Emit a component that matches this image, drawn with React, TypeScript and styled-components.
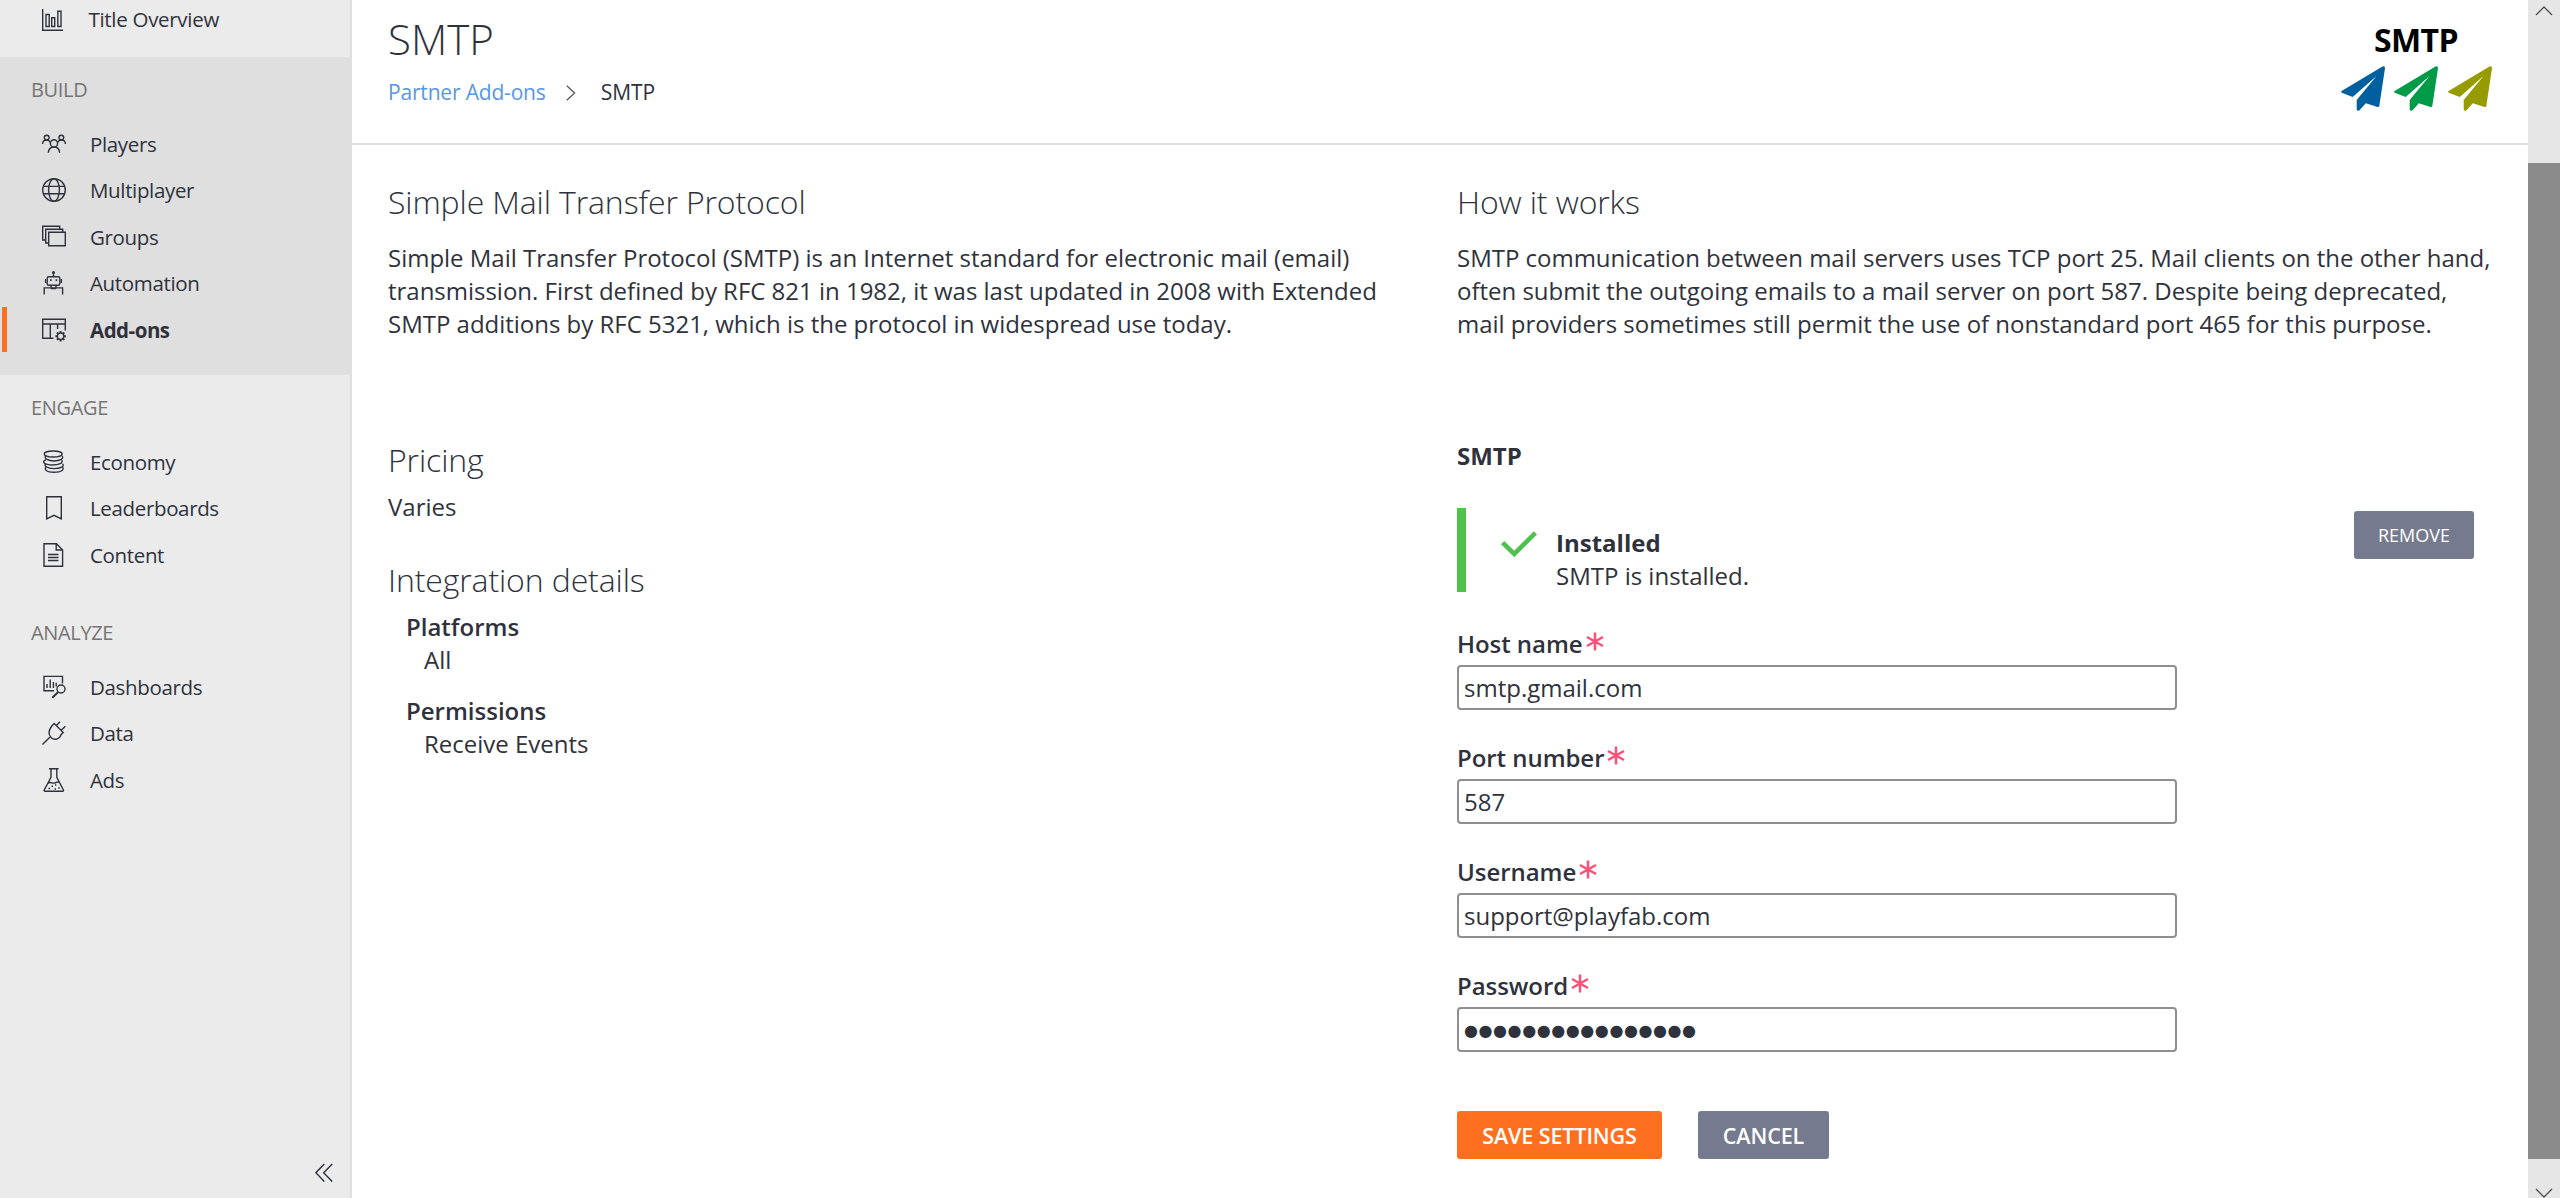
import React from 'react';
import styled, { createGlobalStyle } from 'styled-components';

const ink = '#2f323c';
const line = '#dfdfdf';

const GlobalStyle = createGlobalStyle`
  * { box-sizing: border-box; }
  html, body { margin: 0; padding: 0; overflow: hidden; background: #fff; }
  body { color: ${ink}; font: 400 24px/33px "Open Sans", "Noto Sans", sans-serif; }
  h1, h2, h3, p, ul { margin: 0; padding: 0; list-style: none; }
`;

const Page = styled.div`
  display: flex;
  width: 2560px;
  height: 1198px;
  overflow: hidden;
`;

/* Sidebar */

const Sidebar = styled.nav`
  flex: none;
  display: flex;
  flex-direction: column;
  width: 352px;
  background: #ebebeb;
  border-right: 2px solid ${line};
`;

const TopItem = styled.div`
  display: flex;
  align-items: center;
  height: 57px;
  padding: 0 0 18px 42px;
  font-size: 20.5px;
  letter-spacing: -0.3px;
  gap: 22.5px;
`;

const Section = styled.section<{ $active?: boolean }>`
  padding-bottom: 23px;
  background: ${p => (p.$active ? line : 'transparent')};
`;

const SectionTitle = styled.div`
  display: flex;
  align-items: center;
  height: 64px;
  padding-left: 31px;
  font-size: 20px;
  letter-spacing: -0.35px;
  color: #757575;
`;

const NavList = styled.ul`
  display: flex;
  flex-direction: column;
  gap: 1.5px;
`;

const NavItem = styled.li<{ $active?: boolean }>`
  display: flex;
  align-items: center;
  gap: 24px;
  height: 45px;
  margin-left: 2px;
  padding-left: 35px;
  border-left: 5px solid ${p => (p.$active ? '#ff6f20' : 'transparent')};
  font-size: 20.5px;
  font-weight: ${p => (p.$active ? 700 : 400)};
  letter-spacing: ${p => (p.$active ? -0.5 : -0.35)}px;
`;

const NavLabel = styled.span`
  padding-top: 1px;
`;

const Icon = styled.svg`
  flex: none;
  width: 24px;
  height: 24px;
  fill: none;
  stroke: ${ink};
  stroke-width: 1.4;
  overflow: visible;
`;

const Collapse = styled.div`
  display: flex;
  justify-content: flex-end;
  margin-top: auto;
  padding: 0 17px 15px 0;
`;

const CollapseIcon = styled.svg`
  width: 18px;
  height: 20px;
  fill: none;
  stroke: ${ink};
  stroke-width: 1.4;
`;

/* Main area */

const Main = styled.main`
  flex: 1;
  min-width: 0;
`;

const Header = styled.header`
  display: flex;
  justify-content: space-between;
  height: 145px;
  padding: 10px 36px 0;
  border-bottom: 2px solid ${line};
`;

const Title = styled.h1`
  font-size: 42px;
  line-height: 57px;
  font-weight: 300;
`;

const Crumbs = styled.div`
  display: flex;
  align-items: center;
  height: 29px;
  margin-top: 11px;
  font-size: 21px;
`;

const CrumbLink = styled.span`
  letter-spacing: -0.18px;
  color: #5797e6;
`;

const CrumbArrow = styled.svg`
  width: 10px;
  height: 16px;
  margin: 0 25px 0 20px;
  fill: none;
  stroke: #50535b;
  stroke-width: 1.2;
`;

const Logo = styled.div`
  display: flex;
  flex-direction: column;
  align-items: center;
  width: 152px;
  padding-top: 8px;
`;

const LogoText = styled.div`
  font-size: 32px;
  line-height: 44px;
  font-weight: 700;
  letter-spacing: -0.6px;
  color: #000;
`;

const Planes = styled.div`
  display: flex;
  gap: 9.5px;
  margin-top: 4px;
`;

const PlaneIcon = styled.svg`
  width: 44px;
  height: 45px;
`;

const Columns = styled.div`
  display: grid;
  grid-template-columns: 1033px 1037px;
  column-gap: 36px;
  padding: 0 0 0 36px;
`;

const Intro = styled.section`
  height: 293px;
  padding-top: 35px;
`;

const Heading = styled.h2`
  font-size: 32px;
  line-height: 44px;
  font-weight: 300;
  letter-spacing: -0.12px;
`;

const IntroText = styled.p`
  margin-top: 17px;
  letter-spacing: -0.015px;
`;

const Facts = styled.section``;

const Price = styled.p`
  margin: 8px 0 35px;
`;

const Detail = styled.div`
  padding: 8px 0 0 18px;
  & + & { padding-top: 18px; }
`;

const DetailName = styled.h3`
  font: inherit;
  font-weight: 600;
`;

const DetailValue = styled.p`
  padding-left: 18px;
`;

const Setup = styled.section`
  padding-top: 1px;
`;

const SetupTitle = styled.h3`
  font: inherit;
  font-weight: 700;
`;

const StatusRow = styled.div`
  display: flex;
  justify-content: space-between;
  margin-top: 36px;
  padding-right: 20px;
`;

const Status = styled.div`
  display: flex;
  gap: 19px;
  height: 84px;
  padding: 18px 0 0 35px;
  border-left: 9px solid #51c14e;
`;

const Check = styled.svg`
  width: 36px;
  height: 26px;
  margin-top: 5px;
  fill: none;
  stroke: #51c14e;
  stroke-width: 4.6;
`;

const StatusName = styled.div`
  font-weight: 700;
`;

const Button = styled.button<{ $primary?: boolean; $small?: boolean; $width: number }>`
  width: ${p => p.$width}px;
  height: 48px;
  margin-top: ${p => (p.$small ? 3 : 0)}px;
  padding: 0;
  border: 0;
  border-radius: 3px;
  background: ${p => (p.$primary ? '#ff6f20' : '#757a8e')};
  color: #fff;
  font-family: inherit;
  font-size: ${p => (p.$small ? 18 : 21.5)}px;
  font-weight: ${p => (p.$small ? 400 : 600)};
  letter-spacing: ${p => (p.$small ? 0 : -0.1)}px;
`;

const Form = styled.form`
  display: flex;
  flex-direction: column;
  gap: 30px;
  margin-top: 34px;
`;

const Field = styled.label`
  display: flex;
  flex-direction: column;
`;

const FieldName = styled.span`
  display: flex;
  gap: 3px;
  height: 39px;
  padding-top: 1px;
  font-weight: 600;
  letter-spacing: -0.05px;
`;

const Star = styled.svg`
  width: 18px;
  height: 19px;
  margin-top: 4.500px;
  stroke: #fb5078;
  stroke-width: 2.5;
`;

const Value = styled.span<{ $secret?: boolean }>`
  display: flex;
  align-items: center;
  width: 720px;
  height: 45px;
  padding-left: 5px;
  border: 2px solid #8f8f8f;
  border-radius: 4px;
  ${p => p.$secret && 'padding-top: 2px; font-family: "DejaVu Sans", sans-serif; font-size: 16px; letter-spacing: 0.58px;'}
`;

const Actions = styled.div`
  display: flex;
  gap: 36px;
  margin-top: 29px;
`;

/* Scrollbar */

const Scrollbar = styled.div`
  flex: none;
  display: flex;
  flex-direction: column;
  align-items: center;
  justify-content: space-between;
  width: 32px;
  background: #e6e6e6;
`;

const ScrollArrow = styled.svg`
  width: 18px;
  height: 10px;
  margin: 6px 0 0;
  fill: none;
  stroke: #505050;
  stroke-width: 1.3;
`;

const Thumb = styled.div`
  width: 32px;
  height: 996px;
  margin-top: 147px;
  margin-bottom: 23px;
  background: #8b8b8b;
`;

const icons = {
  overview: <path d="M.7 1v21.3H21M4 6.5h3.2v12H4zM9.7 9.7h3v8.8h-3zM15.8 3.2H19v15.3h-3.2z" />,
  players: (
    <>
      <circle cx="4.7" cy="5.6" r="2.4" />
      <circle cx="19.3" cy="5.6" r="2.4" />
      <circle cx="12" cy="11.4" r="3.6" />
      <path d="M.6 12c0-2.4 1.6-4 4-4 1.8 0 3 .8 3.9 2.4M23.4 12c0-2.4-1.6-4-4-4-1.8 0-3 .8-3.9 2.4M6.3 20.8c.3-3.3 2.4-5.8 5.7-5.8s5.400 2.500 5.700 5.800" />
    </>
  ),
  globe: (
    <>
      <circle cx="12" cy="12" r="11.3" />
      <ellipse cx="12" cy="12" rx="5.4" ry="11.3" />
      <path d="M1.400 8.400h21.200M1.400 15.800h21.200" />
    </>
  ),
  groups: <path d="M3.600 15H.7V1.300h17v2.500M6.700 18H3.700V4.200h17v2.600M6.700 7.200h16.600v13.500H6.700z" />,
  robot: (
    <>
      <rect x="5.200" y="5.800" width="12.600" height="8.400" rx="1.500" />
      <path d="M11.500 5.500V1.500M3.600 8v4M19.400 8v4M9 14.500v2M14 14.500v2M2.200 23.500v-6.600h18.400v6.600M8.500 16.800l1 .8h4l1-.8" />
      <circle cx="11.500" cy="1.500" r=".8" fill={ink} />
      <path d="M8 9.200h1.600M13.600 9.200h1.600" strokeWidth="1.800" />
    </>
  ),
  addons: (
    <>
      <path d="M11.500 20.200H.7V1.200h22.600v11.300M.7 6h22.600M8.300 6v14M15.600 6v5" />
      <circle cx="18.600" cy="18.200" r="3.200" />
      <path d="M18.600 13v1.800M18.600 21.600v1.900M13.400 18.200h1.800M22 18.200h1.900M14.900 14.500l1.300 1.300M21 20.600l1.300 1.300M14.900 21.900l1.300-1.300M21 15.800l1.300-1.300" strokeWidth="1.900" />
    </>
  ),
  economy: (
    <>
      <ellipse cx="11.200" cy="4" rx="9" ry="3" />
      <path d="M3.500 6.200C2 8.500 6 11 12 11s10.500-2.500 8-5M4 9.800c-5 1.700-2 5 6.500 5.200 6.500 0 11-2 9.200-4.900M3.600 13.700c-2 2.300 1.800 4.800 8 4.900 7 .1 11.500-2.400 8.900-4.800M3.900 17.300c-1.700 1.800 0 4.900 8 4.900 8.300 0 10.500-3 8.600-4.900" />
    </>
  ),
  bookmark: <path d="M4.700.8h14.600v22L12 19.300l-7.300 3.500z" />,
  document: <path d="M2 .8h12.500L20.600 7v16.200H2zM14.200.8V7h6.400M6 11.500h10.500M6 14.500h10.500M6 17.500h10.500" />,
  dashboards: (
    <>
      <path d="M12 15.700H2V1.400h18.500v7M5 13V9M8.200 13V4.500M11.400 13V7M14.200 11.500V7.700" />
      <circle cx="19" cy="14" r="4" />
      <path d="M16.200 17l-5.900 5.800" strokeWidth="1.900" />
    </>
  ),
  plug: <path d="M.5 23.500l7.300-7.300M12.200 2.500l9 9-2.200 2.200c-.6 3.600-6.400 6.300-9.700 3-3.200-3.200-3.300-7 .7-12zM14.300 4.600L18 .8M19.200 9.300l4.200-4" />,
  flask: (
    <>
      <path d="M7 .8h9.600M9 .8v8.600L2.200 22c-.3.700 0 1.200.8 1.200h17.600c.8 0 1.100-.5.8-1.200L14.800 9.400V.8M5.700 15.500c3-2.700 4.300.5 6.800-.5 2.300-1 3.300-1.600 5.300-.6" />
      <path d="M6.500 20.500h1.600M9.500 18.200h1.500M12.500 21h1.500M13 17h1.300M16.300 20h1.500" strokeWidth="1.600" />
    </>
  ),
};

type IconName = keyof typeof icons;
const Glyph = ({ name }: { name: IconName }) => <Icon viewBox="0 0 24 24">{icons[name]}</Icon>;

const sections: { title: string; active?: boolean; items: [IconName, string][] }[] = [
  {
    title: 'BUILD',
    active: true,
    items: [
      ['players', 'Players'],
      ['globe', 'Multiplayer'],
      ['groups', 'Groups'],
      ['robot', 'Automation'],
      ['addons', 'Add-ons'],
    ],
  },
  {
    title: 'ENGAGE',
    items: [
      ['economy', 'Economy'],
      ['bookmark', 'Leaderboards'],
      ['document', 'Content'],
    ],
  },
  {
    title: 'ANALYZE',
    items: [
      ['dashboards', 'Dashboards'],
      ['plug', 'Data'],
      ['flask', 'Ads'],
    ],
  },
];

const fields = [
  { name: 'Host name', value: 'smtp.gmail.com' },
  { name: 'Port number', value: '587' },
  { name: 'Username', value: 'support@playfab.com' },
  { name: 'Password', value: '●'.repeat(16), secret: true },
];

export default function App() {
  return (
    <>
      <GlobalStyle />
      <Page>
        <Sidebar>
          <TopItem>
            <Glyph name="overview" />
            Title Overview
          </TopItem>
          {sections.map(s => (
            <Section key={s.title} $active={s.active}>
              <SectionTitle>{s.title}</SectionTitle>
              <NavList>
                {s.items.map(([icon, label]) => (
                  <NavItem key={label} $active={label === 'Add-ons'}>
                    <Glyph name={icon} />
                    <NavLabel>{label}</NavLabel>
                  </NavItem>
                ))}
              </NavList>
            </Section>
          ))}
          <Collapse>
            <CollapseIcon viewBox="0 0 18 20">
              <path d="M9.300 1L.9 9.700l8.400 8.700M17.200 1L8.700 9.700l8.500 8.700" />
            </CollapseIcon>
          </Collapse>
        </Sidebar>

        <Main>
          <Header>
            <div>
              <Title>SMTP</Title>
              <Crumbs>
                <CrumbLink>Partner Add-ons</CrumbLink>
                <CrumbArrow viewBox="0 0 10 16">
                  <path d="M.8.800L8.600 8 .8 15.200" />
                </CrumbArrow>
                <span>SMTP</span>
              </Crumbs>
            </div>
            <Logo>
              <LogoText>SMTP</LogoText>
              <Planes>
                {['#00609f', '#009b48', '#969b00'].map(color => (
                  <PlaneIcon key={color} viewBox="0 0 44 45" fill={color}>
                    <path d="M41.500.6Q44 -.6 44 2.200L38.300 40Q38 41.400 36.500 41L24.800 37.200 18.800 44Q18 45 16.800 44.800 15.700 44.600 15.700 43.500V34L35.500 10 11.700 31 .8 26.700Q-.5 26 .6 25z" />
                  </PlaneIcon>
                ))}
              </Planes>
            </Logo>
          </Header>

          <Columns>
            <Intro>
              <Heading>Simple Mail Transfer Protocol</Heading>
              <IntroText>
                Simple Mail Transfer Protocol (SMTP) is an Internet standard for electronic mail (email)
                transmission. First defined by RFC 821 in 1982, it was last updated in 2008 with Extended SMTP
                additions by RFC 5321, which is the protocol in widespread use today.
              </IntroText>
            </Intro>
            <Intro>
              <Heading>How it works</Heading>
              <IntroText>
                SMTP communication between mail servers uses TCP port 25. Mail clients on the other hand, often
                submit the outgoing emails to a mail server on port 587. Despite being deprecated, mail providers
                sometimes still permit the use of nonstandard port 465 for this purpose.
              </IntroText>
            </Intro>

            <Facts>
              <Heading>Pricing</Heading>
              <Price>Varies</Price>
              <Heading>Integration details</Heading>
              <Detail>
                <DetailName>Platforms</DetailName>
                <DetailValue>All</DetailValue>
              </Detail>
              <Detail>
                <DetailName>Permissions</DetailName>
                <DetailValue>Receive Events</DetailValue>
              </Detail>
            </Facts>

            <Setup>
              <SetupTitle>SMTP</SetupTitle>
              <StatusRow>
                <Status>
                  <Check viewBox="0 0 36 26">
                    <path d="M1.600 11.600l11.600 11.300L34.400 1.800" />
                  </Check>
                  <div>
                    <StatusName>Installed</StatusName>
                    <div>SMTP is installed.</div>
                  </div>
                </Status>
                <Button type="button" $small $width={120}>REMOVE</Button>
              </StatusRow>
              <Form>
                {fields.map(f => (
                  <Field key={f.name}>
                    <FieldName>
                      {f.name}
                      <Star viewBox="0 0 18 19">
                        <path d="M9 .5v18M1 5l16 9M17 5L1 14" />
                      </Star>
                    </FieldName>
                    <Value $secret={f.secret}>{f.value}</Value>
                  </Field>
                ))}
                <Actions>
                  <Button type="button" $primary $width={205}>SAVE SETTINGS</Button>
                  <Button type="button" $width={131}>CANCEL</Button>
                </Actions>
              </Form>
            </Setup>
          </Columns>
        </Main>

        <Scrollbar>
          <ScrollArrow viewBox="0 0 18 10">
            <path d="M1 9l8-8 8 8" />
          </ScrollArrow>
          <Thumb />
          <ScrollArrow viewBox="0 0 18 10">
            <path d="M1 1l8 8 8-8" />
          </ScrollArrow>
        </Scrollbar>
      </Page>
    </>
  );
}
